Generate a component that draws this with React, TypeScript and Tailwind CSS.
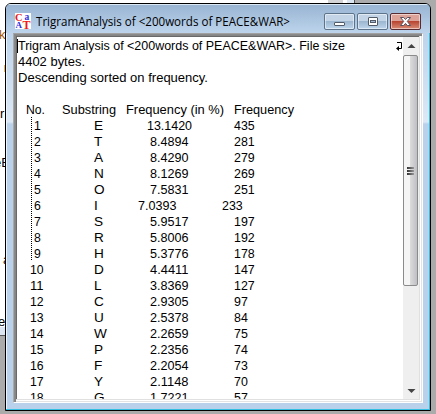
const rows: [string, string, string, string, number, number, number][] = [
  ["1", "E", "13.1420", "435", 34, 147, 234],
  ["2", "T", "8.4894", "281", 34, 150, 234],
  ["3", "A", "8.4290", "279", 34, 150, 234],
  ["4", "N", "8.1269", "269", 34, 150, 234],
  ["5", "O", "7.5831", "251", 34, 150, 234],
  ["6", "I", "7.0393", "233", 34, 138, 222],
  ["7", "S", "5.9517", "197", 34, 150, 234],
  ["8", "R", "5.8006", "192", 34, 150, 234],
  ["9", "H", "5.3776", "178", 34, 150, 234],
  ["10", "D", "4.4411", "147", 30, 150, 234],
  ["11", "L", "3.8369", "127", 30, 150, 234],
  ["12", "C", "2.9305", "97", 30, 150, 234],
  ["13", "U", "2.5378", "84", 30, 150, 234],
  ["14", "W", "2.2659", "75", 30, 150, 234],
  ["15", "P", "2.2356", "74", 30, 150, 234],
  ["16", "F", "2.2054", "73", 30, 150, 234],
  ["17", "Y", "2.1148", "70", 30, 150, 234],
  ["18", "G", "1.7221", "57", 30, 150, 234],
];

function Label({ children, width, size = 13.6 }: { children: string; width?: number; size?: number }) {
  return (
    <svg className="block h-4 overflow-visible" width={width ?? 40} height="16">
      <text x="0" y="13" fontSize={size} textLength={width} lengthAdjust="spacingAndGlyphs">
        {children}
      </text>
    </svg>
  );
}

function TitleBar() {
  return (
    <header className="flex h-[29px] shrink-0 items-start bg-linear-to-b from-[#98b4d2] to-[#bdd4ec] pr-[9px] pl-[9px] shadow-[inset_0_1px_#dce9f5]">
      <svg className="mt-[9px] h-4 w-4 shrink-0 bg-white font-['Liberation_Serif',serif] font-bold" viewBox="0 0 16 16">
        <text x="0" y="8" fontSize="10.5" fill="#f01818">C</text>
        <text x="9.5" y="6.5" fontSize="9.5" fill="#3030e0">a</text>
        <text x="0.5" y="15" fontSize="9" fill="#3030e0">A</text>
        <text x="7.5" y="15.5" fontSize="12" fill="#f01818">T</text>
      </svg>
      <h1 className="mt-[9px] ml-[5px] h-4 flex-1 font-['Open_Sans',sans-serif]">
        <Label width={254} size={12}>{"TrigramAnalysis of <200words of PEACE&WAR>"}</Label>
      </h1>
      <div className="mt-[9px] flex gap-0.5">
        {["min", "max", "close"].map((kind) => (
          <button
            key={kind}
            className={`flex h-[17px] w-[31px] items-center justify-center rounded-[2px] border shadow-[inset_0_0_0_1px_#ffffff80] ${
              kind === "close"
                ? "border-[#582b32] bg-linear-to-b from-[#dda298] from-45% via-[#b84632] via-50% to-[#d88b76]"
                : "border-[#5d7389] bg-linear-to-b from-[#c2d4e6] from-45% via-[#9db7d1] via-50% to-[#bdd6ec]"
            }`}
          >
            <svg width="13" height="11" viewBox="0 0 13 11">
              {kind === "min" && <rect x="1.5" y="6.5" width="10" height="3" rx=".5" fill="#fff" stroke="#535b68" />}
              {kind === "max" && (
                <>
                  <rect x="2.5" y="1.5" width="9" height="8" rx=".5" fill="#fff" stroke="#535b68" />
                  <rect x="4.5" y="4.5" width="5" height="2" fill="#a2bbd3" stroke="#535b68" />
                </>
              )}
              {kind === "close" && (
                <path d="M1.5 1.5h3.2l1.8 2 1.8-2h3.2L8.3 5.4l3.2 4.1H8.3l-1.8-2.1-1.8 2.1H1.5l3.2-4.1z" fill="#fff" stroke="#59515c" />
              )}
            </svg>
          </button>
        ))}
      </div>
    </header>
  );
}

function Report() {
  return (
    <section className="min-w-0 flex-1 overflow-hidden">
      <div className="relative pl-px">
        <Label width={327}>{"Trigram Analysis of <200words of PEACE&WAR>. File size"}</Label>
        <Label width={67}>4402 bytes.</Label>
        <Label width={190}>Descending sorted on frequency.</Label>
        <i className="absolute top-0.5 left-0 h-[14px] w-px bg-black" />
        <svg className="absolute top-[5px] left-[378px]" width="8" height="10">
          <path d="M2 .5H6.5V6.5H2" fill="none" stroke="#000" />
          <path d="M1 6.5 4 4v5z" />
        </svg>
      </div>
      <div className="mt-4 grid grid-cols-[36px_64px_108px_1fr] pl-[9px]">
        <Label width={19}>No.</Label>
        <Label width={54}>Substring</Label>
        <Label width={98}>Frequency (in %)</Label>
        <Label width={60}>Frequency</Label>
      </div>
      <div className="relative">
        {rows.map(([no, letter, percent, count, noX, percentX, countX]) => (
          <div key={no} className="grid grid-cols-[77px_41px_84px_1fr]">
            <div style={{ paddingLeft: noX - 17 }}><Label width={no.length * 6.8}>{no}</Label></div>
            <Label>{letter}</Label>
            <div style={{ paddingLeft: percentX - 135 }}><Label width={percent.length === 7 ? 45 : 38.5}>{percent}</Label></div>
            <div style={{ paddingLeft: countX - 219 }}><Label width={count.length * 6.9}>{count}</Label></div>
          </div>
        ))}
        <i className="absolute top-0 left-[14px] h-[144px] w-px bg-[repeating-linear-gradient(to_bottom,#000_0_1px,#fff_1px_2px)]" />
      </div>
    </section>
  );
}

function ScrollBar() {
  return (
    <aside className="flex w-4 shrink-0 flex-col items-start bg-[#efefef]">
      <svg className="h-[18px] w-4 shrink-0" viewBox="0 0 16 18"><path d="M4.5 11 8.5 7l4 4z" fill="#444" /></svg>
      <div className="flex h-[231px] w-[15px] items-center justify-center rounded-[2px] border border-[#8b8b8b] bg-linear-to-r from-[#f5f5f5] from-45% via-[#dadada] via-50% to-[#bfc0c4]">
        <div className="flex flex-col gap-px">
          {[0, 1, 2].map((line) => (
            <i key={line} className="h-0.5 w-[7px] bg-linear-to-r from-[#333] to-[#999]" />
          ))}
        </div>
      </div>
      <svg className="mt-auto h-[17px] w-4 shrink-0" viewBox="0 0 16 17"><path d="M4.5 7h8l-4 4z" fill="#444" /></svg>
    </aside>
  );
}

export default function App() {
  return (
    <main className="relative h-[414px] w-[436px] overflow-hidden bg-[#ababab] font-['Liberation_Sans',Arial,sans-serif] text-black">
      <div className="absolute top-0 left-0 h-[336px] w-[355px] border-r border-b border-[#555] bg-white text-[13px]">
        <span className="absolute top-[25px] left-[-1px] text-[#a45800]">k</span>
        <i className="absolute top-[65px] left-1 h-[7px] w-px bg-[#f0b840]" />
        <span className="absolute top-[104px] left-0">r</span>
        <span className="absolute top-[153px] left-[-6px]">eE</span>
        <span className="absolute top-[250px] left-[3px] text-[#401000]">a</span>
        <span className="absolute top-[312px] left-[-2px]">e</span>
        <i className="absolute top-0 left-[328px] h-1 w-[15px] bg-[#d4d4d6]" />
        <i className="absolute top-0 right-0 h-1 w-[7px] bg-[#dce6f3]" />
        <i className="absolute bottom-0 left-0 h-2 w-5 bg-[#dce6f3]" />
      </div>
      <section className="absolute top-[3px] left-[5px] flex h-[408px] w-[426px] flex-col overflow-hidden rounded-t-[6px] border border-black bg-[linear-gradient(to_bottom,#bdd4ec_0,#bdd4ec_30px,#dce8f5_118px,#b9d1ea_120px)] shadow-[inset_-1px_-1px_#32bfe1,inset_1px_1px_#edf5fc]">
        <TitleBar />
        <div className="mr-[7px] ml-[7px] flex h-[370px] border border-t-[#a0a0a0] border-r-white border-b-white border-l-[#a9a9a9] bg-white p-[3px] shadow-[inset_1px_1px_#8a8a8a,inset_2px_2px_#858585,inset_-1px_-1px_#e3e3e3,inset_-2px_-2px_#fff,inset_-3px_-3px_#e0e0e0,inset_3px_3px_#696969]">
          <Report />
          <ScrollBar />
        </div>
      </section>
    </main>
  );
}
